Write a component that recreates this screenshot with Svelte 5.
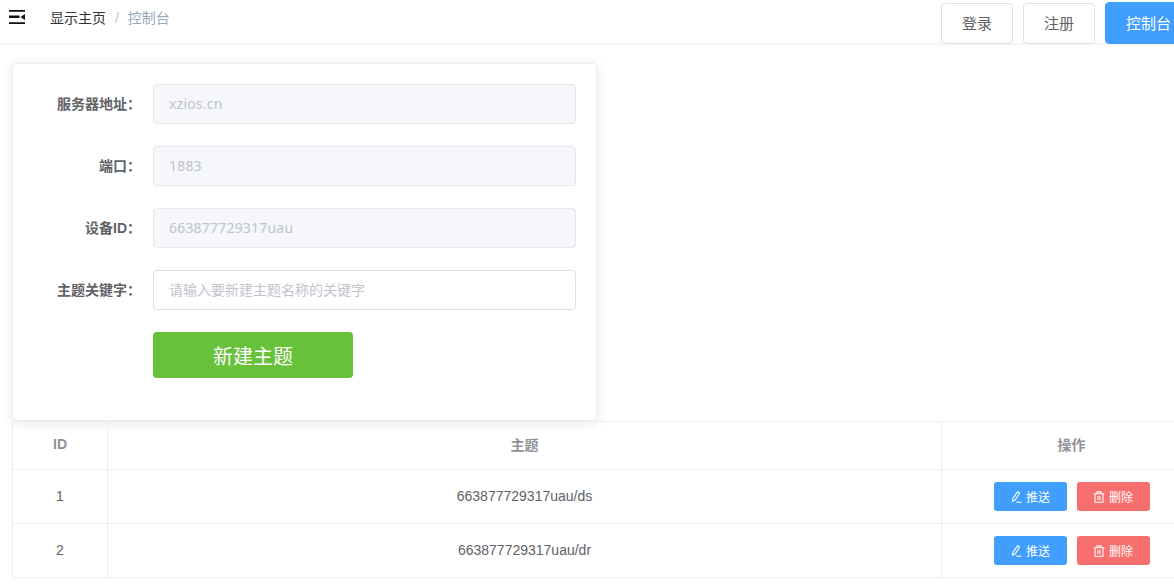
<script>
	const fields = [
		{ label: '服务器地址：', value: 'xzios.cn', disabled: true },
		{ label: '端口：', value: '1883', disabled: true },
		{ label: '设备ID：', value: '663877729317uau', disabled: true },
		{ label: '主题关键字：', placeholder: '请输入要新建主题名称的关键字', disabled: false }
	];

	const topics = [
		{ id: 1, topic: '663877729317uau/ds' },
		{ id: 2, topic: '663877729317uau/dr' }
	];
</script>

<div class="page">
	<header class="navbar">
		<div class="left">
			<svg class="fold" viewBox="0 0 16 14" aria-hidden="true">
				<path d="M0 0h16v1.7H0zM0 5.5h10.5v2.4H0zM0 12.3h16V14H0z" />
				<path d="M16 4v6l-4.6-3z" />
			</svg>
			<nav class="crumbs">
				<span class="home">显示主页</span>
				<span class="sep">/</span>
				<span class="current">控制台</span>
			</nav>
		</div>
		<div class="actions">
			<button class="btn">登录</button>
			<button class="btn">注册</button>
			<button class="btn primary">控制台</button>
		</div>
	</header>

	<main class="content">
		<section class="card">
			<form class="form" onsubmit={(e) => e.preventDefault()}>
				{#each fields as f}
					<div class="item">
						<label for={f.label}>{f.label}</label>
						<input id={f.label} value={f.value ?? ''} placeholder={f.placeholder} disabled={f.disabled} />
					</div>
				{/each}
				<div class="item">
					<button class="create">新建主题</button>
				</div>
			</form>
		</section>

		<div class="table">
			<div class="cell head">ID</div>
			<div class="cell head">主题</div>
			<div class="cell head">操作</div>
			{#each topics as row}
				<div class="cell">{row.id}</div>
				<div class="cell">{row.topic}</div>
				<div class="cell ops">
					<button class="mini push">
						<svg viewBox="0 0 12 12" aria-hidden="true">
							<path d="M6.9 1.6c.5-.7 1.3-.8 1.9-.4.6.4.7 1.2.3 1.8L4.9 9.3l-2.3.9.2-2.5z" />
							<path d="M6.3 11.2h5.2" />
						</svg>
						推送
					</button>
					<button class="mini del">
						<svg viewBox="0 0 12 12" aria-hidden="true">
							<path d="M.6 2.8h10.8M4 2.6V.9h4v1.7M2 2.8v8.4h8V2.8M5 5v4M7 5v4" />
						</svg>
						删除
					</button>
				</div>
			{/each}
		</div>
	</main>
</div>

<style>
	:global(body) {
		margin: 0;
		background: #fff;
	}
	.page {
		width: 1174px;
		height: 586px;
		overflow: hidden;
		font-family: "Liberation Sans", "Noto Sans CJK SC", sans-serif;
		font-size: 14px;
		color: #606266;
	}
	.navbar {
		display: flex;
		justify-content: space-between;
		height: 43px;
		box-shadow: 0 1px 4px rgba(0, 21, 41, 0.08);
		position: relative;
	}
	.left {
		display: flex;
		align-items: flex-start;
	}
	.fold {
		width: 16px;
		height: 14px;
		margin: 10px 0 0 9px;
		fill: #111;
	}
	.crumbs {
		margin: 9px 0 0 25px;
		line-height: 18px;
	}
	.home {
		color: #303133;
	}
	.sep {
		color: #c0c4cc;
		margin: 0 5px;
	}
	.current {
		color: #97a8be;
	}
	.actions {
		display: flex;
		flex: none;
		gap: 10px;
		width: 233px;
		padding-top: 3px;
	}
	.btn {
		flex: none;
		height: 41px;
		padding: 0 20px 2px;
		border: 1px solid #dcdfe6;
		border-radius: 4px;
		background: #fff;
		color: #606266;
		font: inherit;
		font-size: 15px;
	}
	.btn.primary {
		height: 42px;
		margin-top: -1px;
		border-color: #409eff;
		background: #409eff;
		color: #fff;
	}
	.content {
		padding: 20px 0 0 12px;
	}
	.card {
		width: 585px;
		height: 358px;
		box-sizing: border-box;
		padding: 20px;
		border: 1px solid #ebeef5;
		border-radius: 4px;
		box-shadow: 0 2px 12px rgba(0, 0, 0, 0.1);
		background: #fff;
	}
	.item {
		display: flex;
		margin-bottom: 22px;
	}
	.item label {
		width: 108px;
		padding-right: 12px;
		line-height: 40px;
		text-align: right;
		font-weight: 700;
		color: #606266;
	}
	.item input {
		width: 423px;
		height: 40px;
		box-sizing: border-box;
		padding: 0 15px 2px;
		border: 1px solid #dcdfe6;
		border-radius: 4px;
		background: #fff;
		color: #606266;
		font: inherit;
		font-family: "Noto Sans", "Noto Sans CJK SC", sans-serif;
		letter-spacing: 0.2px;
		outline: none;
	}
	.item input::placeholder {
		color: #c0c4cc;
		letter-spacing: 0;
	}
	.item input:disabled {
		background: #f5f7fa;
		border-color: #e4e7ed;
		color: #c0c4cc;
		-webkit-text-fill-color: #c0c4cc;
		opacity: 1;
	}
	.create {
		width: 200px;
		height: 46px;
		margin-left: 120px;
		border: none;
		border-radius: 4px;
		background: #67c23a;
		color: #fff;
		font: inherit;
		font-size: 20px;
	}
	.table {
		display: grid;
		grid-template-columns: 95px 834px 260px;
		grid-template-rows: 48px;
		grid-auto-rows: 54px;
		width: 1190px;
		border-top: 1px solid #ebeef5;
		border-left: 1px solid #ebeef5;
	}
	.cell {
		display: flex;
		align-items: center;
		justify-content: center;
		box-sizing: border-box;
		padding-bottom: 1px;
		border-right: 1px solid #ebeef5;
		border-bottom: 1px solid #ebeef5;
		color: #606266;
	}
	.head {
		padding-bottom: 4px;
		font-weight: 700;
		color: #909399;
	}
	.ops {
		gap: 10px;
		padding-bottom: 0;
	}
	.mini {
		display: inline-flex;
		align-items: center;
		justify-content: center;
		gap: 4px;
		width: 73px;
		height: 29px;
		padding: 0;
		border: none;
		border-radius: 3px;
		color: #fff;
		font: inherit;
		font-size: 12px;
	}
	.mini svg {
		width: 12px;
		height: 12px;
		fill: none;
		stroke: #fff;
		stroke-width: 1.1;
	}
	.push {
		background: #409eff;
	}
	.del {
		background: #f76e6e;
	}
</style>
